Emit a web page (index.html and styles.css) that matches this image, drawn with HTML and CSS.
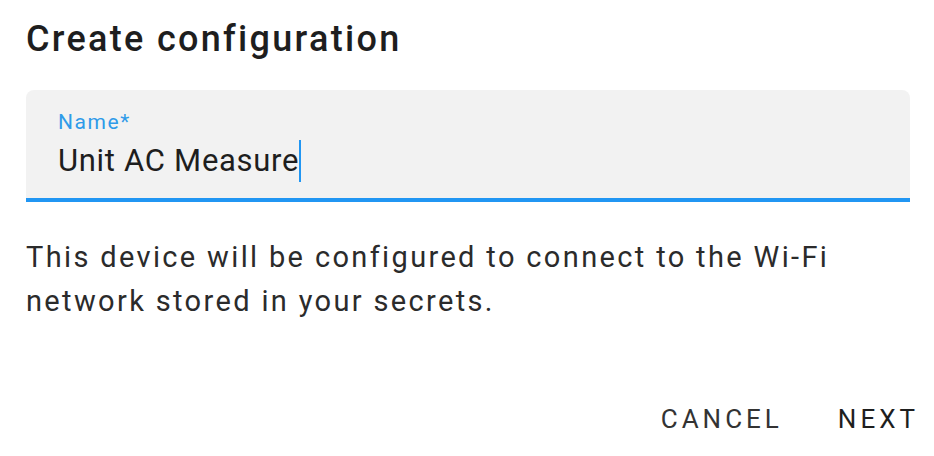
FILE: index.html
```html
<!DOCTYPE html>
<html>
<head>
<meta charset="utf-8">
<link rel="stylesheet" href="styles.css">
</head>
<body>
<div class="dialog">
  <h2 class="title">Create configuration</h2>
  <div class="field">
    <label class="label">Name*</label>
    <div class="input">Unit AC Measure<span class="caret"></span></div>
  </div>
  <p class="body">This device will be configured to connect to the Wi-Fi network stored in your secrets.</p>
  <div class="actions">
    <button class="btn cancel">Cancel</button>
    <button class="btn next">Next</button>
  </div>
</div>
</body>
</html>
```
FILE: styles.css
```css
html, body {
  margin: 0;
  padding: 0;
  background: #ffffff;
}
.dialog {
  width: 934px;
  height: 456px;
  box-sizing: border-box;
  padding: 0 24px 0 26px;
  display: flex;
  flex-direction: column;
  font-family: Roboto, "Liberation Sans", sans-serif;
}
.title {
  margin: 17px 0 0 0;
  font-size: 36px;
  line-height: 44px;
  font-weight: 500;
  letter-spacing: 2.3px;
  color: #1e1e1e;
}
.field {
  margin-top: 29px;
  height: 108px;
  background: #f2f2f2;
  border-radius: 8px 8px 0 0;
  border-bottom: 4px solid #2196f3;
  padding: 0 0 0 32px;
  display: flex;
  flex-direction: column;
}
.label {
  margin-top: 20px;
  font-size: 21px;
  line-height: 24px;
  letter-spacing: 1.6px;
  color: #2f9be9;
}
.input {
  margin-top: 6px;
  font-size: 31px;
  line-height: 40px;
  letter-spacing: 0.7px;
  color: #1e1e1e;
  display: flex;
  align-items: center;
}
.caret {
  display: inline-block;
  width: 2px;
  height: 42px;
  background: #2196f3;
  margin-left: 0;
}
.body {
  margin: 33px 0 0 0;
  font-size: 29px;
  line-height: 44px;
  letter-spacing: 2.35px;
  color: #2b2b2b;
}
.actions {
  margin-top: auto;
  margin-bottom: 22px;
  margin-right: -9px;
  display: flex;
  justify-content: flex-end;
  gap: 55px;
}
.btn {
  background: none;
  border: none;
  padding: 0;
  font-family: Roboto, "Liberation Sans", sans-serif;
  font-size: 26px;
  line-height: 30px;
  font-weight: 400;
  text-transform: uppercase;
  letter-spacing: 4px;
  color: #333333;
}
.next {
  color: #1e1e1e;
}
```
